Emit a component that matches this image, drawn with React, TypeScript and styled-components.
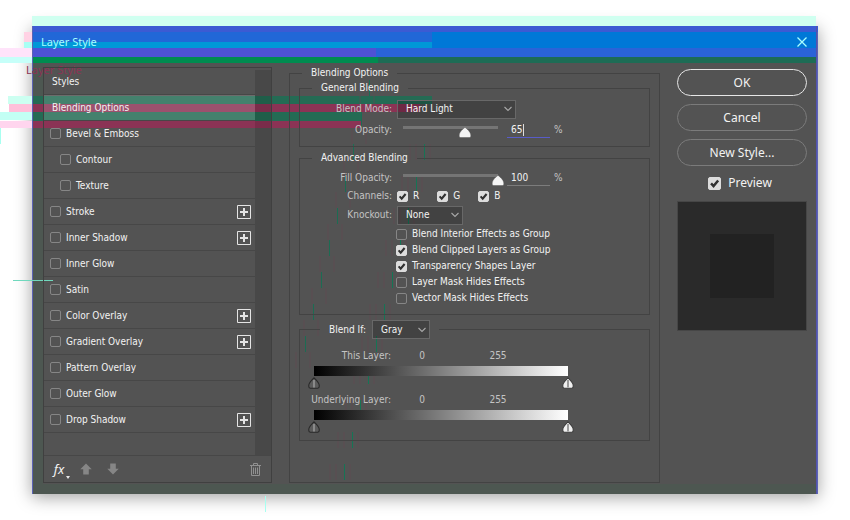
import React, { useState } from "react";
import styled, { createGlobalStyle, css } from "styled-components";

const svgUrl = (body: string, w: number, h: number) =>
  `url("data:image/svg+xml,${encodeURIComponent(
    `<svg xmlns='http://www.w3.org/2000/svg' width='${w}' height='${h}' viewBox='0 0 ${w} ${h}'>${body}</svg>`
  )}")`;

const tick = svgUrl(
  "<path d='M2.6 5.4 L4.7 7.7 L8.6 3' fill='none' stroke='#303030' stroke-width='2.1'/>",
  11,
  11
);
const thumb = svgUrl(
  "<path d='M6 .3 C8 2 11.8 5 11.8 8 V9.3 Q11.8 10.6 10.4 10.6 H1.6 Q.2 10.6 .2 9.3 V8 C.2 5 4 2 6 .3Z' fill='#f4f4f4' stroke='#404040' stroke-width='.4'/>",
  12,
  11
);
const splitThumb = (fill: string, mid: string, edge: string) =>
  svgUrl(
    `<path d='M6 .8 C8 2.8 11.2 5.5 11.2 8.3 V9.6 Q11.2 11.2 9.8 11.2 H2.2 Q.8 11.2 .8 9.6 V8.3 C.8 5.5 4 2.8 6 .8Z' fill='${fill}' stroke='${edge}' stroke-width='1.1'/><path d='M6 3 V10.5' stroke='${mid}' stroke-width='2'/>`,
    12,
    12
  );
const blackThumb = splitThumb("#5c5c5c", "#8a8a8a", "#292929");
const whiteThumb = splitThumb("#f0f0f0", "#9b9b9b", "#3c3c3c");

const Global = createGlobalStyle`
  *, *::before, *::after { box-sizing: border-box; }
  body {
    margin: 0;
    background: #fff;
    overflow: hidden;
    font: 10px/14px "DejaVu Sans Condensed", "DejaVu Sans", sans-serif;
    color: #f2f2f2;
  }
  button, input, select { font: inherit; color: inherit; margin: 0; }
`;

const Page = styled.main`
  min-height: 100vh;
  display: flex;
  padding: 26px 32px;
`;

const Dialog = styled.section`
  position: relative;
  flex: 1;
  display: flex;
  flex-direction: column;
  background: #535353;
  border: 1px solid #5b63b4;
  box-shadow: 0 3px 16px rgba(0, 0, 0, 0.38);
`;

const Bands = styled.svg`
  position: absolute;
  left: -33px;
  top: -27px;
  overflow: visible;
  pointer-events: none;
`;

const TitleBar = styled.header`
  position: relative;
  display: flex;
  align-items: center;
  justify-content: space-between;
  height: 30px;
  padding: 0 10px 0 8px;
  color: #a5ffff;
  font: 11px/16px "Noto Sans", sans-serif;
  h1 {
    margin: 0;
    font: inherit;
  }
`;

const CloseButton = styled.button`
  display: flex;
  padding: 0;
  border: 0;
  background: none;
`;

const Body = styled.div`
  position: relative;
  flex: 1;
  display: grid;
  grid-template-columns: 229px minmax(0, 1fr) 130px;
  column-gap: 17px;
  padding: 10px;
`;

const StylesPanel = styled.nav`
  display: flex;
  flex-direction: column;
  border: 1px solid #404040;
`;

const ListArea = styled.div`
  flex: 1;
  display: flex;
  border-bottom: 1px solid #474747;
`;

const StyleList = styled.ul`
  flex: 1;
  margin: 0;
  padding: 1px 0 0;
  list-style: none;
`;

const ScrollTrack = styled.div`
  width: 16px;
  margin-top: 2px;
  background: rgba(0, 0, 0, 0.12);
`;

const StyleRow = styled.li<{ $selected?: boolean; $indent?: boolean }>`
  display: flex;
  align-items: center;
  justify-content: space-between;
  height: 26px;
  padding: 0 4px 0 ${(p) => (p.$indent ? 16 : 6)}px;
  border-bottom: 1px solid #474747;
  ${(p) =>
    p.$selected &&
    css`
      background: rgba(255, 255, 255, 0.15);
    `}
`;

const CheckLabel = styled.label<{ $gap?: number; $large?: boolean }>`
  display: flex;
  align-items: center;
  gap: ${(p) => p.$gap ?? 5}px;
  ${(p) =>
    p.$large &&
    css`
      justify-content: center;
      padding-right: 4px;
      font: 12px/18px "Noto Sans", sans-serif;
    `}
`;

const Tick = styled.input.attrs({ type: "checkbox" })<{ $size?: number }>`
  appearance: none;
  flex: none;
  width: ${(p) => p.$size ?? 11}px;
  height: ${(p) => p.$size ?? 11}px;
  border: 1px solid #868686;
  border-radius: 2px;
  &:checked {
    border-color: #dcdcdc;
    background: #dcdcdc ${tick} center / 100% 100%;
    background-origin: border-box;
  }
`;

const RowButton = styled.button`
  padding: 0 2px;
  border: 0;
  background: none;
`;

const IconButton = styled.button`
  display: flex;
  padding: 0;
  border: 0;
  background: none;
`;

const PanelFooter = styled.div`
  display: flex;
  align-items: center;
  gap: 15px;
  height: 26px;
  padding: 0 10px 0 9px;
  ${IconButton}:last-child {
    margin-left: auto;
  }
`;

const Group = styled.fieldset<{ $outer?: boolean; $legendInset?: number }>`
  min-width: 0;
  margin: 0 0 5px;
  border: 1px solid #434343;
  padding: 0;
  ${(p) =>
    p.$outer &&
    css`
      margin: 0;
      padding: 3px 9px 0;
    `}
  > legend {
    margin-left: ${(p) => p.$legendInset ?? 12}px;
    padding: 0 9px;
    line-height: 12px;
  }
`;

const BlendIfLegend = styled.legend`
  display: flex;
  align-items: center;
  gap: 6px;
`;

const Fields = styled.div<{ $bottom: number; $top: number }>`
  padding: ${(p) => p.$top}px 0 ${(p) => p.$bottom}px;
`;

const Field = styled.div<{ $height: number }>`
  display: grid;
  grid-template-columns: 92px minmax(0, 1fr);
  column-gap: 5px;
  align-items: center;
  height: ${(p) => p.$height}px;
  color: #c4c4c4;
`;

const FieldLabel = styled.label`
  text-align: right;
  white-space: nowrap;
`;

const Controls = styled.div<{ $gap?: number }>`
  display: flex;
  align-items: center;
  gap: ${(p) => p.$gap ?? 0}px;
  color: #f2f2f2;
`;

const Select = styled.select<{ $width: number }>`
  appearance: none;
  width: ${(p) => p.$width}px;
  height: 19px;
  padding: 0 16px 0 8px;
  border: 1px solid #686868;
  border-radius: 0;
  background: rgba(0, 0, 0, 0.2)
    ${svgUrl("<path d='M.5 1 L4 4.5 L7.5 1' fill='none' stroke='#a8a8a8' stroke-width='1.1'/>", 8, 6)}
    no-repeat right 3px center;
`;

const Slider = styled.input.attrs({ type: "range" })`
  appearance: none;
  width: 107px;
  height: 17px;
  background: linear-gradient(#757575, #757575) no-repeat 6px 4px / calc(100% - 12px) 3px;
  &::-webkit-slider-thumb {
    appearance: none;
    width: 12px;
    height: 11px;
    margin-top: 5px;
    background: ${thumb};
  }
`;

const NumberInput = styled.input<{ $active?: boolean }>`
  width: 43px;
  height: 15px;
  margin: 0 4px 0 3px;
  padding: 0 4px;
  border: 0;
  border-bottom: 1px solid ${(p) => (p.$active ? "#585cc8" : "#7c7c7c")};
  border-radius: 0;
  background: ${(p) =>
    p.$active
      ? "linear-gradient(#dddddd, #dddddd) no-repeat 16px 1px / 1px 12px"
      : "none"};
  outline: 0;
`;

const Unit = styled.span`
  color: #c4c4c4;
`;

const OptionList = styled.div`
  display: grid;
  grid-auto-rows: 16px;
  align-items: center;
  margin-left: 96px;
`;

const Ramp = styled.div`
  display: grid;
  width: 266px;
  margin-left: 8px;
  grid-template-rows: 10px 14px;
  &::before {
    content: "";
    margin: 0 6px;
    background: linear-gradient(to right, #000, #fff);
  }
`;

const RampSlider = styled.input.attrs({ type: "range", min: 0, max: 255 })<{ $white?: boolean }>`
  appearance: none;
  grid-area: 2 / 1;
  width: 100%;
  height: 14px;
  background: none;
  pointer-events: none;
  &::-webkit-slider-thumb {
    appearance: none;
    width: 12px;
    height: 12px;
    background: ${(p) => (p.$white ? whiteThumb : blackThumb)};
    pointer-events: auto;
  }
`;

const RampHeader = styled.div`
  display: grid;
  grid-template-columns: 91px 62px 90px;
  height: 20px;
  align-items: center;
  color: #c4c4c4;
  span {
    text-align: right;
    white-space: nowrap;
  }
  output {
    text-align: center;
  }
`;

const Actions = styled.aside`
  display: flex;
  flex-direction: column;
  gap: 8px;
  padding-top: 2px;
`;

const PillButton = styled.button<{ $primary?: boolean }>`
  height: 27px;
  padding: 0;
  border: ${(p) => (p.$primary ? "1px solid #e6e6e6" : "1px solid #7b7b7b")};
  border-radius: 14px;
  background: none;
  font: 12px/18px "Noto Sans", sans-serif;
`;

const Swatch = styled.div`
  display: grid;
  place-items: center;
  height: 130px;
  margin-top: 1px;
  border: 1px solid #464646;
  background: #2a2a2a;
  &::after {
    content: "";
    width: 64px;
    height: 64px;
    background: #222;
  }
`;

const PlusIcon = () => (
  <svg width="14" height="14" viewBox="0 0 14 14">
    <path d="M.5 .5H13.5V13.5H.5Z" fill="none" stroke="#e4e4e4" />
    <path d="M7 3V11M3 7H11" stroke="#e4e4e4" strokeWidth="2" />
  </svg>
);

const ArrowIcon = ({ down }: { down?: boolean }) => (
  <svg width="12" height="12" viewBox="0 0 12 12">
    <path
      d={down ? "M6 11.5 .3 5.7H3.2V.5H8.8V5.7H11.7Z" : "M6 .5 .3 6.3H3.2V11.5H8.8V6.3H11.7Z"}
      fill="#868686"
    />
  </svg>
);

const TrashIcon = () => (
  <svg width="11" height="13" viewBox="0 0 11 13" fill="none" stroke="#919191">
    <path d="M0 2.5H11M3.5 2V.5H7.5V2M1.5 3V12.5H9.5V3M3.5 4.5V11M5.5 4.5V11M7.5 4.5V11" />
  </svg>
);

const FxText = styled.span`
  position: relative;
  width: 12px;
  font: italic 13px/18px "Noto Sans", sans-serif;
  svg {
    position: absolute;
    right: -5px;
    bottom: -1px;
  }
`;

type Band = [x: number, y: number, w: number, h: number, fill: string];

const bands: Band[] = [
  [32, 16, 784, 10, "#cffff0"],
  [33, 26, 785, 6, "#3b5bd3"],
  [24, 32, 8, 10, "#ffd2e4"],
  [33, 32, 399, 10, "#2167d7"],
  [432, 32, 384, 16, "#0078d7"],
  [24, 42, 8, 6, "#a8fff4"],
  [33, 42, 399, 6, "#0098d7"],
  [0, 48, 32, 9, "#ffe3fa"],
  [33, 48, 343, 9, "#4e52d4"],
  [376, 48, 440, 9, "#2a63d8"],
  [0, 57, 32, 6, "#c6fff9"],
  [33, 57, 345, 6, "#008c50"],
  [378, 57, 438, 6, "#1d6c55"],
  [816, 26, 1, 468, "#5353ad"],
  [33, 63, 10, 431, "#4d5751"],
  [33, 484, 783, 10, "#4d5751"],
  [8, 96, 24, 8, "#ccfff1"],
  [33, 96, 399, 8, "#246b54"],
  [9, 104, 23, 8, "#ffbfda"],
  [33, 104, 387, 8, "#8b3355"],
  [0, 112, 32, 8, "#c2fff4"],
  [33, 112, 328, 9, "#246b54"],
  [0, 121, 32, 7, "#ffd5ee"],
  [33, 121, 328, 7, "#8b3355"],
  [13, 280, 40, 1, "#70d8bd"],
  [265, 496, 1, 16, "#a8fff0"],
  [0, 128, 1, 16, "#a8fff0"],
];

const streaks = Array.from({ length: 11 }, (_, i) => ({ x: 424 - i * 8, y: 144 + i * 32 }));
const farStreaks = Array.from({ length: 9 }, (_, i) => ({ x: 369 - i * 8, y: 80 + i * 32 }));

const GlitchBands = () => (
  <Bands width="850" height="520" aria-hidden="true">
    {bands.map(([x, y, w, h, fill]) => (
      <rect key={`${x}-${y}`} x={x} y={y} width={w} height={h} fill={fill} />
    ))}
    {streaks.map(({ x, y }) => (
      <React.Fragment key={x}>
        <rect x={x} y={y} width="1" height="16" fill="#167455" />
        <path d={`M${x - 8} ${y}v16M${x - 14} ${y}v16M${x + 6} ${y}v16`} stroke="#664952" opacity=".6" />
      </React.Fragment>
    ))}
    {farStreaks.map(({ x, y }) => (
      <React.Fragment key={x}>
        <rect x={x} y={y} width="1" height="16" fill="#1c6c53" />
        <path d={`M${x - 9} ${y + 16}v16M${x + 5} ${y + 16}v16`} stroke="#664952" opacity=".6" />
      </React.Fragment>
    ))}
    <text x="26" y="74" fill="#8b3355" fontFamily="Noto Sans, sans-serif" fontSize="11">
      Layer Style
    </text>
  </Bands>
);

const effects: { name: string; indent?: boolean; add?: boolean }[] = [
  { name: "Bevel & Emboss" },
  { name: "Contour", indent: true },
  { name: "Texture", indent: true },
  { name: "Stroke", add: true },
  { name: "Inner Shadow", add: true },
  { name: "Inner Glow" },
  { name: "Satin" },
  { name: "Color Overlay", add: true },
  { name: "Gradient Overlay", add: true },
  { name: "Pattern Overlay" },
  { name: "Outer Glow" },
  { name: "Drop Shadow", add: true },
];

const options: [string, boolean][] = [
  ["Blend Interior Effects as Group", false],
  ["Blend Clipped Layers as Group", true],
  ["Transparency Shapes Layer", true],
  ["Layer Mask Hides Effects", false],
  ["Vector Mask Hides Effects", false],
];

const OpacityField = ({ label, id, start, height, active }: {
  label: string; id: string; start: number; height: number; active?: boolean;
}) => {
  const [value, setValue] = useState(start);
  const change = (e: React.ChangeEvent<HTMLInputElement>) => setValue(Number(e.target.value) || 0);
  return (
    <Field $height={height}>
      <FieldLabel htmlFor={id}>{label}</FieldLabel>
      <Controls>
        <Slider id={id} value={value} onChange={change} />
        <NumberInput aria-label={`${label} percent`} $active={active} value={value} onChange={change} />
        <Unit>%</Unit>
      </Controls>
    </Field>
  );
};

const RampField = ({ label }: { label: string }) => {
  const [range, setRange] = useState([0, 255]);
  return (
    <>
      <RampHeader>
        <span>{label}</span>
        <output>{range[0]}</output>
        <output>{range[1]}</output>
      </RampHeader>
      <Ramp>
        <RampSlider aria-label={`${label} black`} value={range[0]}
          onChange={(e) => setRange([Math.min(Number(e.target.value), range[1]), range[1]])} />
        <RampSlider $white aria-label={`${label} white`} value={range[1]}
          onChange={(e) => setRange([range[0], Math.max(Number(e.target.value), range[0])])} />
      </Ramp>
    </>
  );
};

export default function App() {
  return (
    <Page>
      <Global />
      <Dialog role="dialog" aria-labelledby="dialog-title">
        <GlitchBands />
        <TitleBar>
          <h1 id="dialog-title">Layer Style</h1>
          <CloseButton aria-label="Close">
            <svg width="10" height="10" viewBox="0 0 10 10">
              <path d="M.5 .5 9.5 9.5M9.5 .5 .5 9.5" stroke="#a8ffff" strokeWidth="1.3" />
            </svg>
          </CloseButton>
        </TitleBar>
        <Body>
          <StylesPanel aria-label="Layer effects">
            <ListArea>
              <StyleList>
                <StyleRow><RowButton>Styles</RowButton></StyleRow>
                <StyleRow $selected><RowButton>Blending Options</RowButton></StyleRow>
                {effects.map(({ name, indent, add }) => (
                  <StyleRow key={name} $indent={indent}>
                    <CheckLabel><Tick />{name}</CheckLabel>
                    {add && <IconButton aria-label={`Add ${name}`}><PlusIcon /></IconButton>}
                  </StyleRow>
                ))}
              </StyleList>
              <ScrollTrack />
            </ListArea>
            <PanelFooter>
              <IconButton aria-label="Effects menu">
                <FxText>
                  fx
                  <svg width="4" height="3" viewBox="0 0 4 3"><path d="M0 0H4L2 3Z" fill="#e8e8e8" /></svg>
                </FxText>
              </IconButton>
              <IconButton aria-label="Move effect up"><ArrowIcon /></IconButton>
              <IconButton aria-label="Move effect down"><ArrowIcon down /></IconButton>
              <IconButton aria-label="Delete effect"><TrashIcon /></IconButton>
            </PanelFooter>
          </StylesPanel>

          <Group $outer $legendInset={3}>
            <legend>Blending Options</legend>
            <Group>
              <legend>General Blending</legend>
              <Fields $top={5} $bottom={5}>
                <Field $height={20}>
                  <FieldLabel htmlFor="mode">Blend Mode:</FieldLabel>
                  <Controls>
                    <Select id="mode" $width={119} defaultValue="Hard Light">
                      <option>Hard Light</option>
                      <option>Normal</option>
                    </Select>
                  </Controls>
                </Field>
                <OpacityField label="Opacity:" id="opacity" start={65} height={22} active />
              </Fields>
            </Group>
            <Group>
              <legend>Advanced Blending</legend>
              <Fields $top={4} $bottom={8}>
                <OpacityField label="Fill Opacity:" id="fill" start={100} height={20} />
                <Field $height={16} role="group" aria-label="Channels">
                  <FieldLabel as="span">Channels:</FieldLabel>
                  <Controls $gap={18}>
                    {["R", "G", "B"].map((c) => (
                      <CheckLabel key={c}><Tick defaultChecked />{c}</CheckLabel>
                    ))}
                  </Controls>
                </Field>
                <Field $height={22}>
                  <FieldLabel htmlFor="knockout">Knockout:</FieldLabel>
                  <Controls>
                    <Select id="knockout" $width={66} defaultValue="None">
                      <option>None</option>
                      <option>Shallow</option>
                      <option>Deep</option>
                    </Select>
                  </Controls>
                </Field>
                <OptionList>
                  {options.map(([name, on]) => (
                    <CheckLabel key={name}><Tick defaultChecked={on} />{name}</CheckLabel>
                  ))}
                </OptionList>
              </Fields>
            </Group>
            <Group $legendInset={20}>
              <BlendIfLegend>
                <label htmlFor="blend-if">Blend If:</label>
                <Select id="blend-if" $width={58} defaultValue="Gray">
                  <option>Gray</option>
                  <option>Red</option>
                  <option>Green</option>
                  <option>Blue</option>
                </Select>
              </BlendIfLegend>
              <Fields $top={7} $bottom={6}>
                <RampField label="This Layer:" />
                <RampField label="Underlying Layer:" />
              </Fields>
            </Group>
          </Group>

          <Actions>
            <PillButton $primary>OK</PillButton>
            <PillButton>Cancel</PillButton>
            <PillButton>New Style...</PillButton>
            <CheckLabel $gap={7} $large><Tick $size={13} defaultChecked />Preview</CheckLabel>
            <Swatch />
          </Actions>
        </Body>
      </Dialog>
    </Page>
  );
}
